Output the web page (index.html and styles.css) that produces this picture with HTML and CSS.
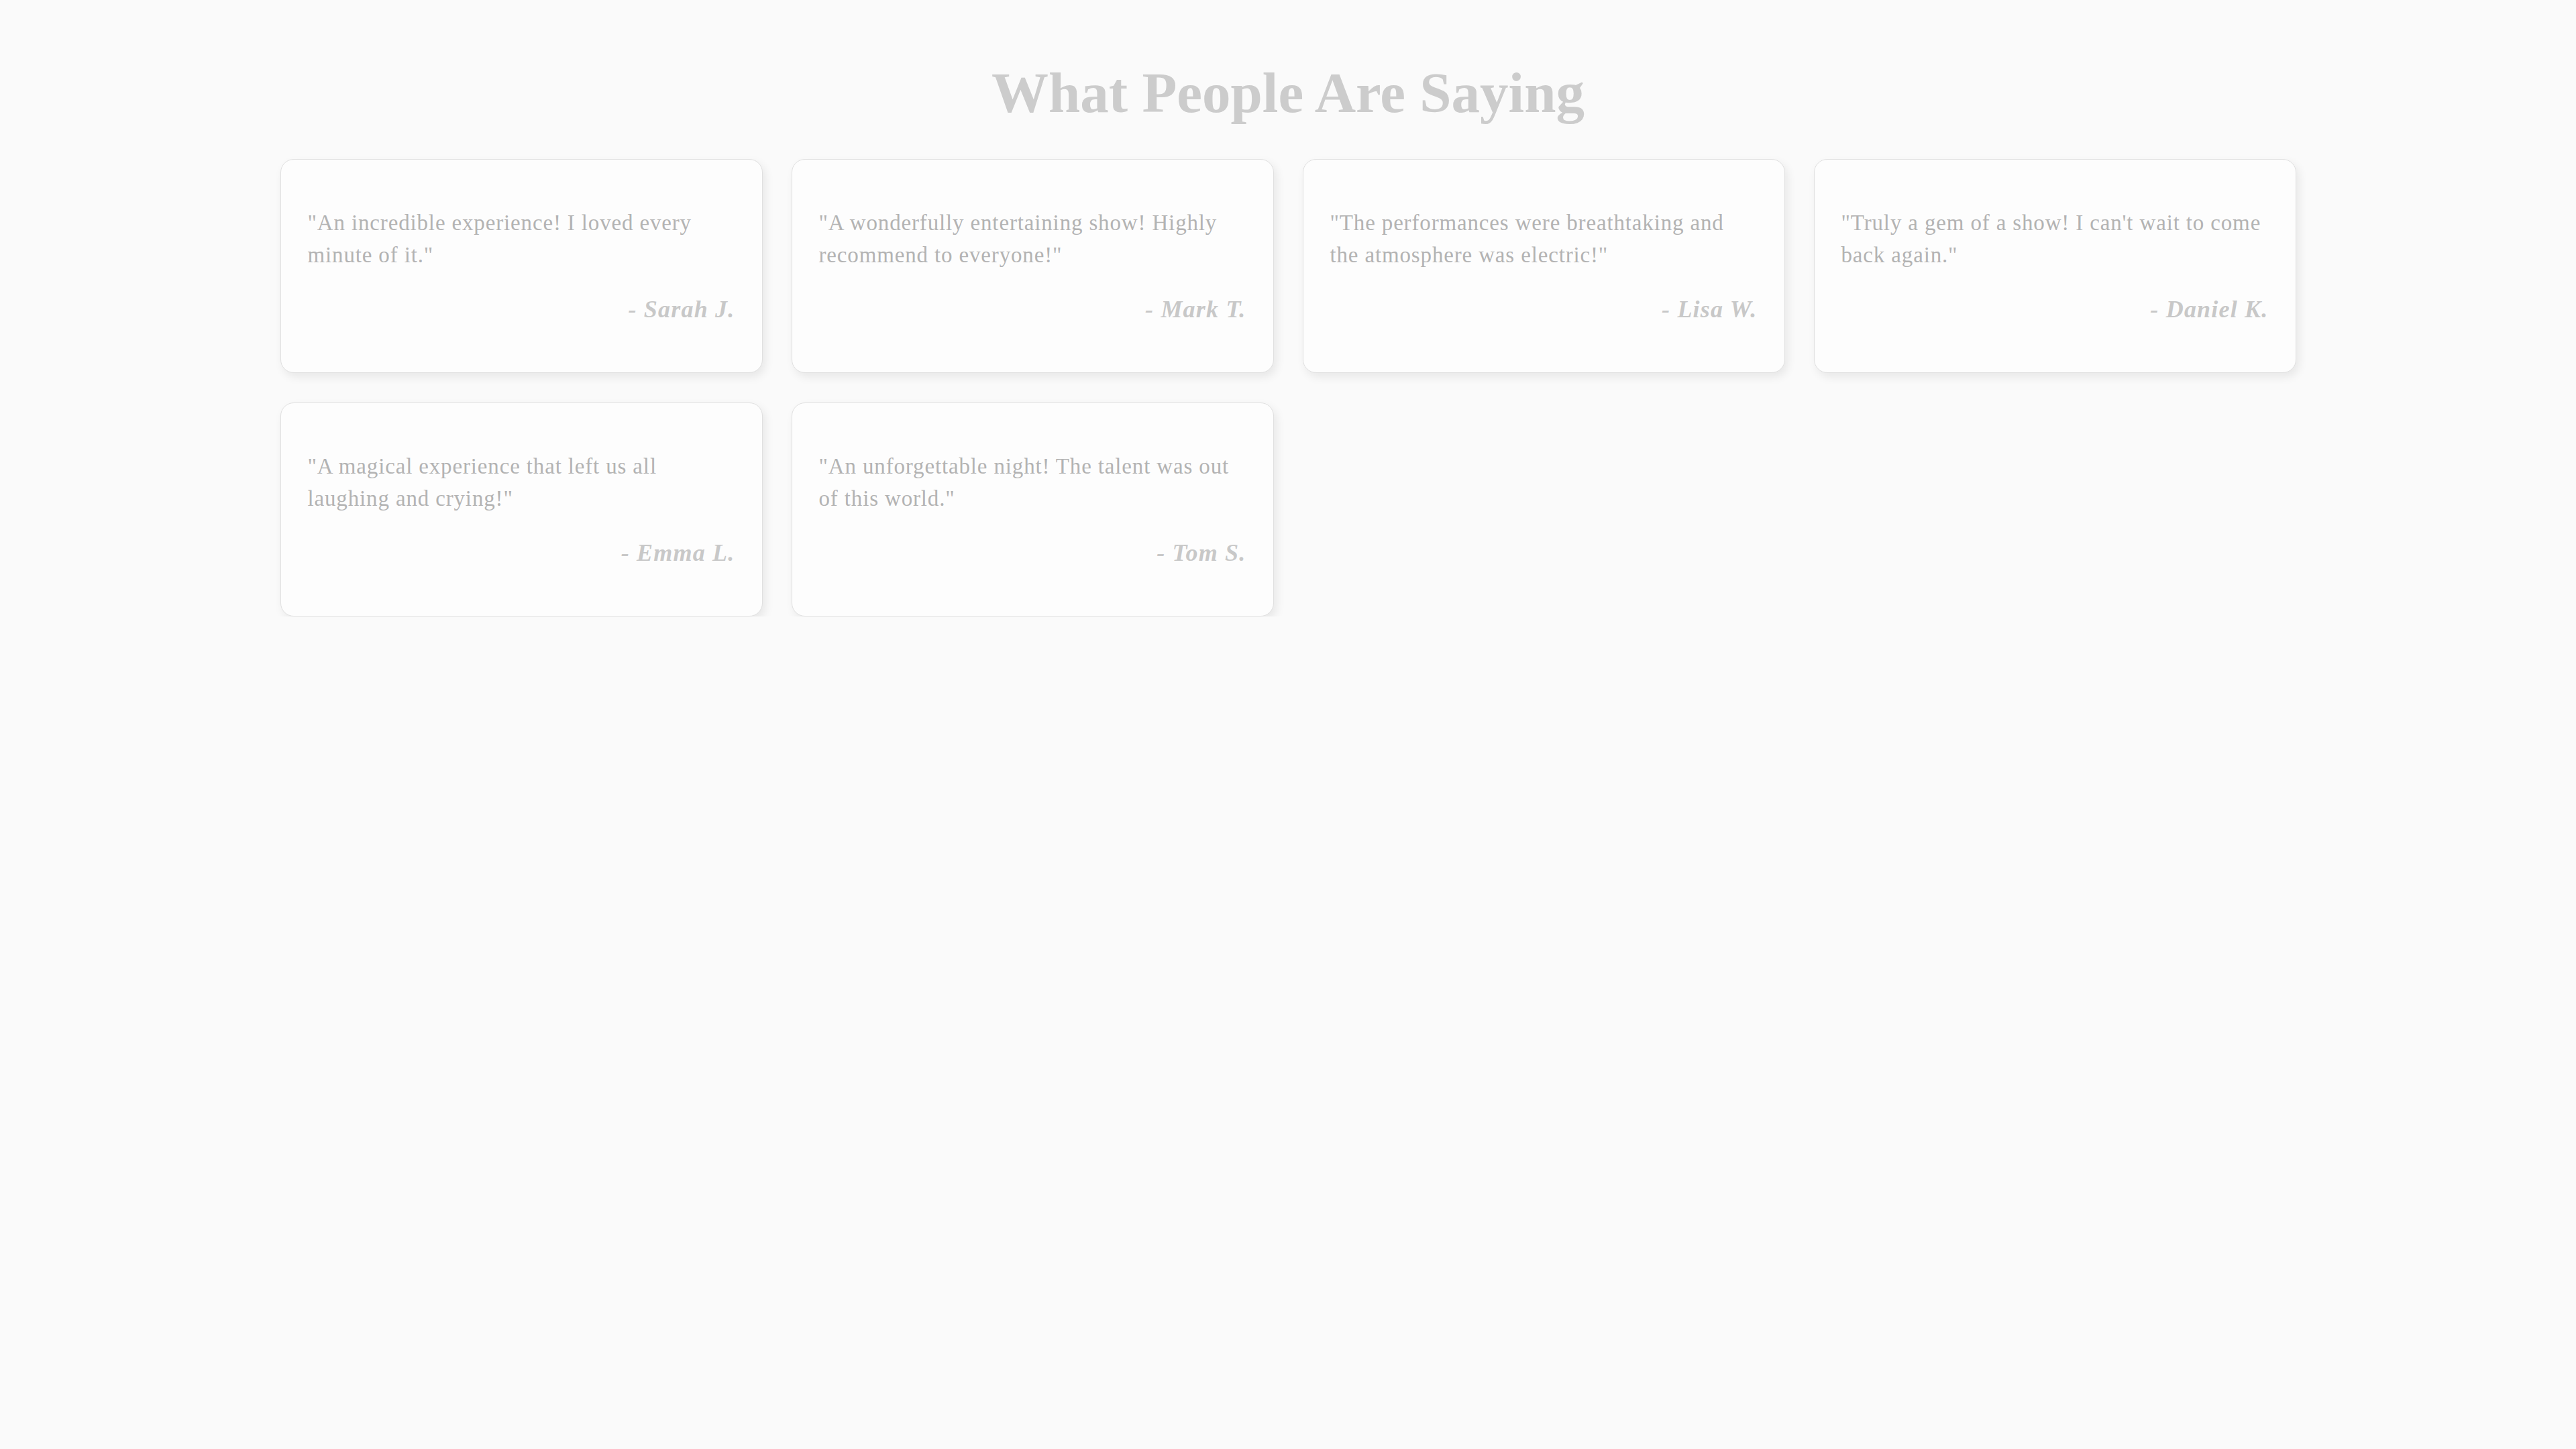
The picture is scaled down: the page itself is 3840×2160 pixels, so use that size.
FILE: index.html
```html
<!DOCTYPE html>
<html lang="en">
<head>
<meta charset="utf-8">
<title>What People Are Saying</title>
<link rel="stylesheet" href="styles.css">
</head>
<body>
<main class="page">
  <h1 class="title">What People Are Saying</h1>
  <section class="grid">
    <article class="card">
      <p class="quote">"An incredible experience! I loved every minute of it."</p>
      <p class="author">- Sarah J.</p>
    </article>
    <article class="card">
      <p class="quote">"A wonderfully entertaining show! Highly recommend to everyone!"</p>
      <p class="author">- Mark T.</p>
    </article>
    <article class="card">
      <p class="quote">"The performances were breathtaking and the atmosphere was electric!"</p>
      <p class="author">- Lisa W.</p>
    </article>
    <article class="card">
      <p class="quote">"Truly a gem of a show! I can't wait to come back again."</p>
      <p class="author">- Daniel K.</p>
    </article>
    <article class="card">
      <p class="quote">"A magical experience that left us all laughing and crying!"</p>
      <p class="author">- Emma L.</p>
    </article>
    <article class="card">
      <p class="quote">"An unforgettable night! The talent was out of this world."</p>
      <p class="author">- Tom S.</p>
    </article>
  </section>
</main>
</body>
</html>
```

FILE: styles.css
```css
html, body {
  margin: 0;
  padding: 0;
  background: #fafafa;
}

body {
  font-family: "Liberation Serif", "Times New Roman", serif;
}

.page {
  padding-top: 87px;
}

.title {
  margin: 0 0 48px;
  text-align: center;
  font-size: 85px;
  line-height: 102px;
  font-weight: bold;
  color: #cccccc;
}

.grid {
  display: grid;
  grid-template-columns: repeat(4, 719px);
  gap: 44px 43px;
  justify-content: center;
}

.card {
  background: #fdfdfd;
  border: 1px solid #e0e0e0;
  border-radius: 20px;
  padding: 40px;
  box-shadow: 4px 6px 14px rgba(0, 0, 0, 0.08);
}

.quote {
  margin: 30px 0 0;
  font-size: 33px;
  line-height: 48px;
  letter-spacing: 0.85px;
  color: #b3b3b3;
}

.author {
  margin: 31px 0 28px;
  text-align: right;
  font-size: 36px;
  line-height: 52px;
  letter-spacing: 1.2px;
  font-weight: bold;
  font-style: italic;
  color: #c8c8c8;
}
```
